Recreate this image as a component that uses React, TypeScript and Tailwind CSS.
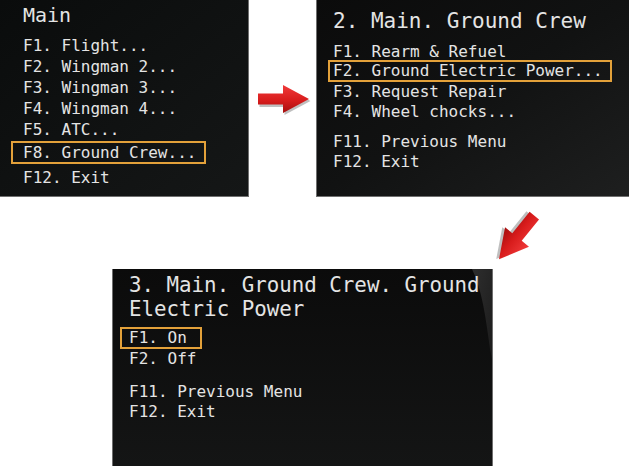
const mono = "font-['DejaVu_Sans_Mono','Liberation_Mono',monospace]";

function Arrow({ angle, scale = 1 }: { angle: number; scale?: number }) {
  return (
    <svg width="60" height="60" viewBox="-30 -30 60 60">
      <defs>
        <linearGradient id={`ar${angle}`} x1="0" y1="0" x2="0" y2="1">
          <stop offset="0" stopColor="#f03a3a" />
          <stop offset="0.55" stopColor="#d81c1c" />
          <stop offset="1" stopColor="#a50f0f" />
        </linearGradient>
      </defs>
      <g transform={`rotate(${angle}) scale(${scale})`}>
        <polygon
          points="-25,-5 0,-5 0,-14 26,0 0,14 0,6 -25,6"
          fill="#000"
          opacity="0.25"
          transform="translate(1.5,2)"
        />
        <polygon
          points="-25,-5.5 0,-5.5 0,-14 26,0 0,14 0,5.5 -25,5.5"
          fill={`url(#ar${angle})`}
        />
      </g>
    </svg>
  );
}

function Row({ children }: { children: string }) {
  return <div className="whitespace-pre">{children}</div>;
}

export default function App() {
  return (
    <div className={`w-[629px] h-[466px] bg-white overflow-hidden ${mono} text-[#e4e4e4]`}>
      {/* top row */}
      <div className="flex h-[197px]">
        <div className="w-[249px] h-[197px] bg-linear-to-br from-[#0a0c0c] to-[#151717] border-r border-b border-[#6f6f6f] pl-[23px] pt-[3px]">
          <div className="text-[20px] leading-[24px]">Main</div>
          <div className="mt-[8px] text-[16px] leading-[21px]">
            <Row>F1. Flight...</Row>
            <Row>F2. Wingman 2...</Row>
            <Row>F3. Wingman 3...</Row>
            <Row>F4. Wingman 4...</Row>
            <Row>F5. ATC...</Row>
            <div className="mt-[1px] -ml-[12px] w-[195px] border-2 border-[#e3a13a] pl-[10px] leading-[19px] whitespace-pre">
              F8. Ground Crew...
            </div>
            <div className="mt-[3px]">
              <Row>F12. Exit</Row>
            </div>
          </div>
        </div>

        <div className="flex-1 flex items-center justify-center">
          <Arrow angle={0} />
        </div>

        <div className="w-[313px] h-[197px] bg-linear-to-br from-[#0b0b0b] via-[#111212] to-[#1e1f1f] border-l border-b border-[#6f6f6f] pl-[16px] pt-[9px]">
          <div className="text-[21px] leading-[24px] whitespace-pre">2. Main. Ground Crew</div>
          <div className="mt-[9px] text-[16px] leading-[20px]">
            <Row>F1. Rearm &amp; Refuel</Row>
            <div className="-mt-[2px] -ml-[5px] w-[284px] border-2 border-[#e3a13a] pl-[3px] leading-[18px] whitespace-pre">
              F2. Ground Electric Power...
            </div>
            <Row>F3. Request Repair</Row>
            <Row>F4. Wheel chocks...</Row>
            <div className="mt-[10px]">
              <Row>F11. Previous Menu</Row>
              <Row>F12. Exit</Row>
            </div>
          </div>
        </div>
      </div>

      {/* connector row */}
      <div className="h-[72px] pt-[10px] pl-[487px]">
        <Arrow angle={129} scale={1.1} />
      </div>

      {/* bottom panel */}
      <div className="relative ml-[112px] w-[381px] h-[197px] overflow-hidden bg-linear-to-b from-[#0b0b0b] to-[#141515] border-l border-r border-[#6f6f6f]">
        <svg className="absolute right-0 top-0" width="30" height="90" viewBox="0 0 30 90">
          <defs>
            <linearGradient id="sh" x1="0" y1="0" x2="1" y2="1">
              <stop offset="0" stopColor="#2e2e2e" />
              <stop offset="1" stopColor="#1c1c1c" />
            </linearGradient>
          </defs>
          <path d="M10 0 C 20 20, 24 50, 28 80 L 30 90 L 30 0 Z" fill="url(#sh)" />
        </svg>
        <div className="relative pl-[16px] pt-[4px]">
          <div className="text-[20.8px] leading-[24px] whitespace-pre">
            <div>3. Main. Ground Crew. Ground</div>
            <div>Electric Power</div>
          </div>
          <div className="mt-[6px] text-[16px] leading-[20px]">
            <div className="-ml-[9px] w-[82px] border-2 border-[#e3a13a] pl-[7px] leading-[18px] whitespace-pre">
              F1. On
            </div>
            <Row>F2. Off</Row>
            <div className="mt-[13px]">
              <Row>F11. Previous Menu</Row>
              <Row>F12. Exit</Row>
            </div>
          </div>
        </div>
      </div>
    </div>
  );
}
